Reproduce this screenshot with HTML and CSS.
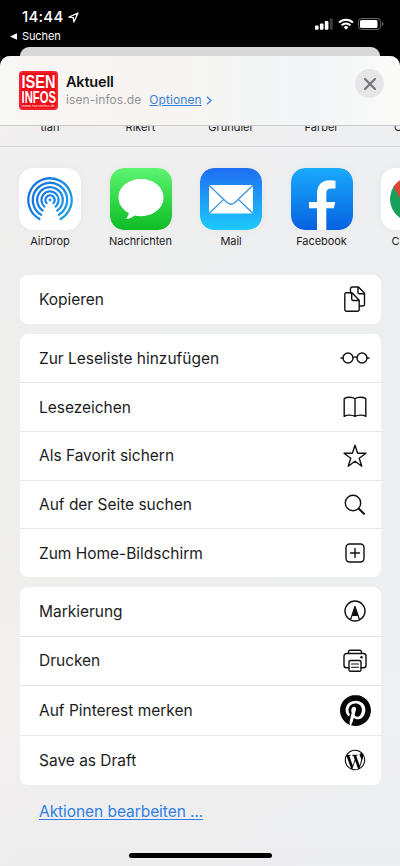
FILE: index.html
```html
<!DOCTYPE html>
<html lang="de">
<head>
<meta charset="utf-8">
<title>Aktuell</title>
<link rel="stylesheet" href="styles.css">
</head>
<body>
<div class="phone">
  <header class="status">
    <div class="status-left">
      <div class="time">14:44
        <svg width="11" height="11" viewBox="0 0 11 11"><path d="M10 1L1 5.2l4.2.5L5.900 10z" fill="none" stroke="#fff" stroke-width="1.300" stroke-linejoin="round"/></svg>
      </div>
      <div class="back"><svg width="7" height="7" viewBox="0 0 7 7"><path d="M0 3.500L7 .3v6.400z" fill="#fff"/></svg><span>Suchen</span></div>
    </div>
    <div class="status-right">
      <svg class="signal" width="18" height="12" viewBox="0 0 18 12"><g fill="#fff"><rect x="0" y="7.500" width="3.600" height="4.300" rx="1"/><rect x="4.900" y="5.500" width="3.600" height="6.300" rx="1"/><rect x="9.800" y="3" width="3.600" height="8.800" rx="1"/></g><rect x="14.600" y=".6" width="3.300" height="11.200" rx="1" fill="#3b3b3b"/></svg>
      <svg class="wifi" width="16" height="12" viewBox="0 0 16 12"><g fill="none" stroke="#fff" stroke-width="2"><path d="M1 4.600a10 10 0 0 1 14 0"/><path d="M3.600 7.400a6.200 6.200 0 0 1 8.800 0"/></g><path d="M5.700 9.200a3.200 3.200 0 0 1 4.600 0L8 11.700z" fill="#fff"/></svg>
      <svg class="battery" width="26" height="12" viewBox="0 0 26 12"><rect x=".5" y=".5" width="22" height="11" rx="3" fill="none" stroke="#666"/><rect x="2" y="2" width="17.500" height="8" rx="1.600" fill="#fff"/><path d="M24 4v4q1.400-.7 1.400-2T24 4z" fill="#777"/></svg>
    </div>
  </header>
  <div class="sheet-behind"></div>
  <main class="sheet">
    <section class="sheet-head">
      <svg class="site-logo" width="39" height="39" viewBox="0 0 39 39">
        <rect width="39" height="39" rx="4" fill="#ee0c18"/>
        <rect x="1" y="1" width="37" height="37" rx="3" fill="none" stroke="#f4686c" stroke-width=".5"/>
        <g fill="#fff" font-family="Liberation Sans" font-weight="bold">
          <text x="2.500" y="16.500" font-size="18.500" textLength="34" lengthAdjust="spacingAndGlyphs">ISEN</text>
          <text x="2.500" y="31.500" font-size="17" textLength="34.500" lengthAdjust="spacingAndGlyphs">INFOS</text>
          <text x="3" y="36.300" font-size="4.200" fill="#fbb" textLength="33" lengthAdjust="spacingAndGlyphs">www.iseninfos.de</text>
        </g>
      </svg>
      <div class="site">
        <div class="site-title">Aktuell</div>
        <div class="site-sub"><span>isen-infos.de</span><a class="options">Optionen</a><svg width="6" height="9" viewBox="0 0 6 9"><path d="M1 .8l4 3.700-4 3.700" fill="none" stroke="#3b82d8" stroke-width="1.300"/></svg></div>
      </div>
      <div class="close"><svg width="12" height="12" viewBox="0 0 12 12"><path d="M1 1l10 10M11 1L1 11" stroke="#77777b" stroke-width="2.300" stroke-linecap="round"/></svg></div>
    </section>
    <section class="people"><span>tian</span><span>Rikert</span><span>Gründler</span><span>Färber</span><span class="partial">C</span></section>
    <section class="apps">
      <div class="app"><svg width="62" height="62" viewBox="0 0 62 62">
        <defs><linearGradient id="ad" x1="0" y1="8" x2="0" y2="54" gradientUnits="userSpaceOnUse"><stop offset="0" stop-color="#1ea0e8"/><stop offset="1" stop-color="#1570e2"/></linearGradient></defs>
        <rect width="62" height="62" rx="14" fill="#fff"/>
        <g fill="none" stroke="url(#ad)" stroke-width="2.300" stroke-linecap="round">
          <circle cx="31" cy="32" r="21.700" pathLength="360" stroke-dasharray="302 58" transform="rotate(119 31 32)"/>
          <circle cx="31" cy="32" r="17.200" pathLength="360" stroke-dasharray="298 62" transform="rotate(121 31 32)"/>
          <circle cx="31" cy="32" r="12.800" pathLength="360" stroke-dasharray="290 70" transform="rotate(125 31 32)"/>
          <circle cx="31" cy="32" r="8.600" pathLength="360" stroke-dasharray="280 80" transform="rotate(130 31 32)"/>
          <circle cx="31" cy="32" r="4.600" pathLength="360" stroke-dasharray="262 98" transform="rotate(139 31 32)"/>
        </g><circle cx="31" cy="32" r="1.400" fill="#1b85e4"/></svg><span>AirDrop</span></div>
      <div class="app"><svg width="62" height="62" viewBox="0 0 62 62">
        <defs><linearGradient id="ms" x1="0" y1="0" x2="0" y2="1"><stop offset="0" stop-color="#5df571"/><stop offset="1" stop-color="#0dbb25"/></linearGradient></defs>
        <rect width="62" height="62" rx="14" fill="url(#ms)"/>
        <path d="M31 11C18.500 11 8.500 19 8.500 29.500c0 6.500 4 12.200 10.300 15.500-.3 2.400-1.400 4.300-3 6 3.700-.3 6.500-1.700 8.700-3.600 2 .5 4.200.8 6.500.8 12.500 0 22.500-8.300 22.500-18.700S43.500 11 31 11z" fill="#fff"/></svg><span>Nachrichten</span></div>
      <div class="app"><svg width="62" height="62" viewBox="0 0 62 62">
        <defs><linearGradient id="ml" x1="0" y1="0" x2="0" y2="1"><stop offset="0" stop-color="#1e6ef2"/><stop offset="1" stop-color="#1dcbfb"/></linearGradient></defs>
        <rect width="62" height="62" rx="14" fill="url(#ml)"/>
        <rect x="9" y="17" width="44" height="28.500" rx="2" fill="#fff"/>
        <path d="M9.500 17.700L26.500 34q4.500 4.400 9 0L52.500 17.700M9.500 45L23.700 31.400M52.500 45L38.300 31.400" fill="none" stroke="#3d94e4" stroke-width="1.300"/></svg><span>Mail</span></div>
      <div class="app"><svg width="62" height="62" viewBox="0 0 62 62">
        <defs><linearGradient id="fb" x1="0" y1="0" x2="0" y2="1"><stop offset="0" stop-color="#19aafb"/><stop offset="1" stop-color="#0662e0"/></linearGradient></defs>
        <rect width="62" height="62" rx="14" fill="url(#fb)"/>
        <path d="M26 62V40.300h-8V34h8V26c0-8.800 4.600-13.700 12.700-13.700 2.400 0 4.300.2 5.800.5v7.600h-3.900c-4 0-5.300 1.900-5.300 5.100V34h8.900l-1.300 6.300h-7.600V62z" fill="#fff"/></svg><span>Facebook</span></div>
      <div class="app"><svg width="62" height="62" viewBox="0 0 62 62">
        <rect width="62" height="62" rx="14" fill="#fff"/>
        <path d="M31 31L13 18A23 23 0 0 0 31 54z" fill="#17a05a"/>
        <path d="M21 34L12.500 18.500A23 23 0 0 1 51 19.500z" fill="#dc4437"/>
        <path d="M31 31V54a23 23 0 0 0 20-34.500z" fill="#ffcd40"/>
        <circle cx="31" cy="31" r="10.500" fill="#fff"/><circle cx="31" cy="31" r="8.500" fill="#4285f4"/></svg><span>Chrome</span></div>
    </section>
    <section class="card">
      <div class="row"><span>Kopieren</span><svg viewBox="0 0 32 32"><path d="M11.500 10V5.800a1.800 1.800 0 0 1 1.800-1.800h6.200l6 6.200V21.200a1.800 1.800 0 0 1-1.800 1.800h-3M19 4.300v4.900a1.500 1.500 0 0 0 1.500 1.500h5"/><path d="M7.300 9.700h5.700l7.200 7.500v9.300a1.800 1.800 0 0 1-1.800 1.800H7.600a1.800 1.800 0 0 1-1.800-1.800V11.200a1.500 1.500 0 0 1 1.500-1.500zM12.700 10v6a1.500 1.500 0 0 0 1.500 1.500h6"/></svg></div>
    </section>
    <section class="card">
      <div class="row"><span>Zur Leseliste hinzufügen</span><svg viewBox="0 0 32 32"><circle cx="9" cy="16" r="5"/><circle cx="23" cy="16" r="5"/><path d="M2 16H4M28 16h2M14 15.500q2-1.300 4 0"/></svg></div>
      <div class="row"><span>Lesezeichen</span><svg viewBox="0 0 32 32"><path d="M16 7.800C13.500 5.800 8 5.800 5.200 7.600v17.800c3-2 8.300-1.500 10.800 0 2.500-1.500 7.800-2 10.800 0V7.600C24 5.800 18.500 5.800 16 7.800zM16 7.800v17.500"/></svg></div>
      <div class="row"><span>Als Favorit sichern</span><svg viewBox="0 0 32 32"><path d="M16 5.300l2.600 8h8.400l-6.800 4.900 2.600 8L16 21.300l-6.800 4.900 2.600-8L5 13.300h8.400z"/></svg></div>
      <div class="row"><span>Auf der Seite suchen</span><svg viewBox="0 0 32 32"><circle cx="14" cy="14" r="7.700"/><path d="M19.800 19.800l5.200 5" stroke-width="2"/></svg></div>
      <div class="row"><span>Zum Home-Bildschirm</span><svg viewBox="0 0 32 32"><rect x="7" y="7" width="18" height="18" rx="3.500"/><path d="M16 11.500v9M11.500 16h9"/></svg></div>
    </section>
    <section class="card card-apps">
      <div class="row"><span>Markierung</span><svg viewBox="0 0 32 32"><circle cx="16" cy="16" r="10"/><path d="M11.500 24.800L16 11.500l4.500 13.300M13 20.500h6" stroke-width="1.200"/><path d="M16 10.500l3 9.800h-6z" fill="#111" stroke="none"/></svg></div>
      <div class="row"><span>Drucken</span><svg viewBox="0 0 32 32"><path d="M9.500 8.500V7a1.800 1.800 0 0 1 1.800-1.800h9.400A1.800 1.800 0 0 1 22.500 7v1.500M10 22.800H7.500A2.500 2.500 0 0 1 5 20.300V11a2.500 2.500 0 0 1 2.500-2.500h17A2.500 2.500 0 0 1 27 11v9.300a2.500 2.500 0 0 1-2.500 2.500H22"/><rect x="10" y="15.500" width="12" height="10.800" rx="1.600"/><path d="M12.500 19h7M12.500 22.300h7" stroke-width="1.100"/><circle cx="22.500" cy="12.200" r="1.200" fill="#111" stroke="none"/></svg></div>
      <div class="row tall"><span>Auf Pinterest merken</span><svg class="solid pin" viewBox="0 0 24 24"><path d="M12.017 0C5.396 0 .029 5.367.029 11.987c0 5.079 3.158 9.417 7.618 11.162-.105-.949-.199-2.403.041-3.439.219-.937 1.406-5.957 1.406-5.957s-.359-.72-.359-1.781c0-1.663.967-2.911 2.168-2.911 1.024 0 1.518.769 1.518 1.688 0 1.029-.653 2.567-.992 3.992-.285 1.193.6 2.165 1.775 2.165 2.128 0 3.768-2.245 3.768-5.487 0-2.861-2.063-4.869-5.008-4.869-3.410 0-5.409 2.562-5.409 5.199 0 1.033.394 2.143.889 2.741.099.12.112.225.085.345-.09.375-.293 1.199-.334 1.363-.053.225-.172.271-.401.165-1.495-.69-2.433-2.878-2.433-4.646 0-3.776 2.748-7.252 7.920-7.252 4.158 0 7.392 2.967 7.392 6.923 0 4.135-2.607 7.462-6.233 7.462-1.214 0-2.354-.629-2.758-1.379l-.749 2.848c-.269 1.045-1.004 2.352-1.498 3.146 1.123.345 2.306.535 3.550.535 6.607 0 11.985-5.365 11.985-11.987C23.970 5.390 18.592.026 11.985.026z"/></svg></div>
      <div class="row tall"><span>Save as Draft</span><svg class="solid" viewBox="-6.800 -6.800 37.600 37.600"><path d="M21.469 6.825c.84 1.537 1.318 3.300 1.318 5.175 0 3.979-2.156 7.456-5.363 9.325l3.295-9.527c.615-1.540.82-2.771.82-3.864 0-.405-.026-.78-.07-1.110m-7.981.105c.647-.03 1.232-.105 1.232-.105.582-.075.514-.93-.067-.899 0 0-1.755.135-2.880.135-1.064 0-2.850-.15-2.850-.15-.585-.03-.661.855-.075.885 0 0 .54.061 1.125.09l1.680 4.605-2.370 7.080L5.354 6.900c.649-.03 1.234-.1 1.234-.1.585-.075.516-.93-.065-.896 0 0-1.746.138-2.874.138-.2 0-.438-.008-.69-.015C4.911 3.150 8.235 1.215 12 1.215c2.809 0 5.365 1.072 7.286 2.833-.046-.003-.091-.009-.141-.009-1.060 0-1.812.923-1.812 1.914 0 .89.513 1.643 1.060 2.531.411.72.89 1.643.89 2.977 0 .915-.354 1.994-.821 3.479l-1.075 3.585-3.900-11.610.001.014zM12 22.784c-1.059 0-2.081-.153-3.048-.437l3.237-9.406 3.315 9.087c.024.053.05.101.078.149-1.120.393-2.325.609-3.582.609M1.211 12c0-1.564.336-3.050.935-4.390L7.290 21.709C3.694 19.960 1.212 16.271 1.211 12M12 0C5.385 0 0 5.385 0 12s5.385 12 12 12 12-5.385 12-12S18.615 0 12 0"/></svg></div>
    </section>
    <a class="edit">Aktionen bearbeiten ...</a>
    <div class="home-bar"></div>
  </main>
</div>
</body>
</html>
```
FILE: styles.css
```css
* { box-sizing: border-box; }
body { margin: 0; background: #000; font-family: Inter, "Liberation Sans", sans-serif; color: #1c1c1e; }
svg { display: block; flex: none; }
.phone { width: 400px; height: 866px; overflow: hidden; display: flex; flex-direction: column; background: #000; }
.status { height: 47px; flex: none; display: flex; justify-content: space-between; color: #fff; padding: 8px 16px 0 10px; }
.time { display: flex; align-items: center; gap: 4px; padding-left: 12px; font-size: 15px; font-weight: 500; line-height: 18px; letter-spacing: .25px; }
.back { display: flex; align-items: center; gap: 5px; margin-top: 4px; font-size: 11px; line-height: 13px; letter-spacing: -.1px; }
.status-right { display: flex; align-items: flex-start; padding-top: 10px; }
.wifi { margin-left: 5px; }
.battery { margin-left: 4px; }
.sheet-behind { height: 9px; flex: none; margin: 0 20px; background: #d8d8d9; border-radius: 9px 9px 0 0; }
.sheet { height: 810px; flex: none; border-radius: 10px 10px 0 0; overflow: hidden; display: flex; flex-direction: column;
  background: linear-gradient(100deg, rgba(246,238,235,.25), rgba(235,238,243,.45)), linear-gradient(180deg, #f0f0f1 0, #eceeee 28%, #eeefee 60%, #f2f1f0 82%, #ededed 100%); }
.sheet-head { height: 70px; flex: none; display: flex; align-items: flex-start; padding: 15px 16px 0 19px; border-bottom: 1px solid #cbcbcc;
  background: linear-gradient(90deg, #f8f8f7 0, #f8f4f1 32%, #f5f6f4 55%, #f3f6f8 78%, #fafaf8 100%); }
.site { margin: 2px 0 0 8px; }
.site-title { font-size: 14.500px; line-height: 18px; font-weight: 600; letter-spacing: -.2px; color: #111; }
.site-sub { display: flex; align-items: center; font-size: 12px; line-height: 18px; color: #929295; letter-spacing: .08px; }
.options { margin: 0 4px 0 8px; color: #3b82d8; text-decoration: underline; }
.close { margin: -2px 0 0 auto; width: 29px; height: 29px; border-radius: 50%; background: #e6e6e8; display: flex; align-items: center; justify-content: center; }
.people { height: 21px; flex: none; display: flex; gap: 28.500px; padding-left: 19px; overflow: hidden; border-bottom: 1px solid #d7d7d9; font-size: 11px; line-height: 14px; }
.people span { width: 62px; flex: none; text-align: center; margin-top: -6px; }
.people .partial { text-align: left; padding-left: 13px; }
.apps { height: 128px; flex: none; display: flex; gap: 28.500px; padding: 21px 0 0 19px; overflow: hidden; }
.app { width: 62px; flex: none; display: flex; flex-direction: column; align-items: center; font-size: 11px; line-height: 14px; gap: 4px; letter-spacing: -.05px; }
.app svg { border-radius: 14px; box-shadow: 0 0 8px rgba(0,0,0,.035); }
.card { flex: none; margin: 0 19px 10px 20px; background: #fff; border-radius: 8px; }
.row { height: 48.700px; display: flex; align-items: center; justify-content: space-between; padding: 0 10px 0 19px; font-size: 15.500px; letter-spacing: -.02px; }
.row.tall { height: 50px; }
.row + .row { border-top: 1px solid #e5e5e6; }
.row svg { width: 32px; height: 32px; fill: none; stroke: #111; stroke-width: 1.400; stroke-linecap: round; stroke-linejoin: round; }
.row svg.solid { fill: #050505; stroke: none; }
.row svg.pin { width: 31px; height: 31px; }
.edit { align-self: flex-start; margin: 5px 0 0 39px; font-size: 15.500px; line-height: 24px; letter-spacing: -.06px; color: #2f80e4; text-decoration: underline; text-underline-offset: 2px; }
.home-bar { width: 143px; height: 5px; flex: none; border-radius: 3px; background: #000; margin: auto 0 8px 129px; }
```
